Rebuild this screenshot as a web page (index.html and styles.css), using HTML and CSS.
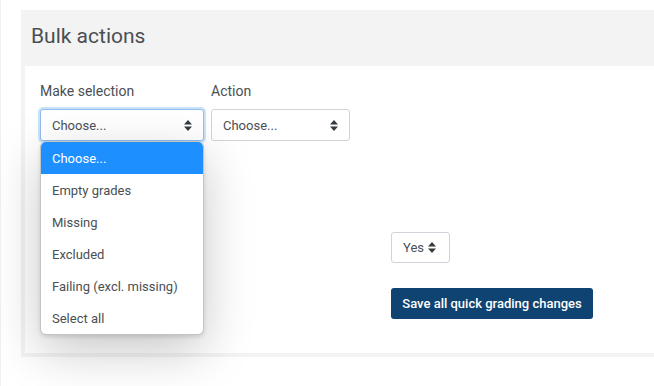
FILE: index.html
```html
<!DOCTYPE html>
<html>
<head>
<meta charset="utf-8">
<link rel="stylesheet" href="styles.css">
</head>
<body>
<div class="page">
  <section class="card">
    <h3 class="card-title">Bulk actions</h3>
    <div class="card-body">
      <div class="row">
        <div class="group">
          <label class="label">Make selection</label>
          <div class="select-wrap">
            <div class="select select-sel focused"><span>Choose...</span>
              <svg class="arrows" width="8" height="11" viewBox="0 0 8 11"><path d="M4 0L8 4.5H0Z M4 11L0 6.5H8Z" fill="#343a40"/></svg>
            </div>
            <ul class="menu">
              <li class="item active">Choose...</li>
              <li class="item">Empty grades</li>
              <li class="item">Missing</li>
              <li class="item">Excluded</li>
              <li class="item">Failing (excl. missing)</li>
              <li class="item">Select all</li>
            </ul>
          </div>
        </div>
        <div class="group">
          <label class="label">Action</label>
          <div class="select select-act"><span>Choose...</span>
            <svg class="arrows" width="8" height="11" viewBox="0 0 8 11"><path d="M4 0L8 4.5H0Z M4 11L0 6.5H8Z" fill="#343a40"/></svg>
          </div>
        </div>
      </div>
      <div class="lower">
        <div class="select select-yes"><span>Yes</span>
          <svg class="arrows" width="8" height="11" viewBox="0 0 8 11"><path d="M4 0L8 4.5H0Z M4 11L0 6.5H8Z" fill="#343a40"/></svg>
        </div>
        <button class="btn">Save all quick grading changes</button>
      </div>
    </div>
  </section>
</div>
</body>
</html>
```
FILE: styles.css
```css
html, body {
  margin: 0;
  padding: 0;
  background: #fff;
}
body {
  font-family: Roboto, "Liberation Sans", sans-serif;
  width: 654px;
  height: 386px;
  overflow: hidden;
}
.page {
  height: 386px;
  box-sizing: border-box;
  border-left: 1px solid #f0f0f0;
  padding: 10px 0 0 20px;
}
.card {
  background: #f3f3f3;
  padding: 0 0 4px 4px;
  display: flex;
  flex-direction: column;
}
.card-title {
  margin: 0;
  height: 56px;
  box-sizing: border-box;
  padding: 13px 0 0 6px;
  font-size: 21px;
  font-weight: 400;
  color: #4a4f54;
  line-height: 26px;
}
.card-body {
  background: #fff;
  height: 287px;
  box-sizing: border-box;
  padding: 16px 0 0 15px;
}
.row {
  display: flex;
  gap: 7px;
}
.group {
  display: flex;
  flex-direction: column;
}
.label {
  font-size: 14px;
  color: #4a4f54;
  line-height: 18px;
  height: 18px;
  margin-bottom: 9px;
}
.select-wrap {
  position: relative;
}
.select {
  box-sizing: border-box;
  height: 32px;
  border: 1px solid #ced4da;
  border-radius: 3px;
  background: #fff;
  display: flex;
  align-items: center;
  justify-content: space-between;
  font-size: 13px;
  color: #495057;
  padding: 0 11px 0 11px;
}
.select-sel { width: 164px; }
.select-act { width: 139px; }
.focused {
  border-color: #8fbfef;
  box-shadow: 0 0 0 2px rgba(143, 191, 239, 0.45);
}
.arrows { display: block; }
.menu {
  position: absolute;
  left: 0;
  top: 32px;
  width: 164px;
  margin: 0;
  padding: 0;
  list-style: none;
  background: #fff;
  border: 1px solid #c4c4c4;
  border-radius: 6px;
  box-sizing: border-box;
  overflow: hidden;
  box-shadow: 0 16px 50px rgba(0, 0, 0, 0.22), 0 2px 4px rgba(0, 0, 0, 0.12);
  z-index: 5;
}
.item {
  height: 32px;
  line-height: 33px;
  padding-left: 11px;
  font-size: 13px;
  color: #4a4f54;
}
.item.active {
  background: #1e8fff;
  color: #fff;
}
.lower {
  margin-left: 351px;
  margin-top: 91px;
  display: flex;
  flex-direction: column;
  align-items: flex-start;
}
.select-yes {
  width: 59px;
  height: 31px;
  padding: 0 13px 0 11px;
}
.btn {
  margin-top: 25px;
  height: 31px;
  width: 202px;
  box-sizing: border-box;
  border: 0;
  border-radius: 3px;
  background: #0f4372;
  color: #fff;
  font-family: Roboto, "Liberation Sans", sans-serif;
  font-size: 13px;
  font-weight: 500;
  padding: 0;
}
```
